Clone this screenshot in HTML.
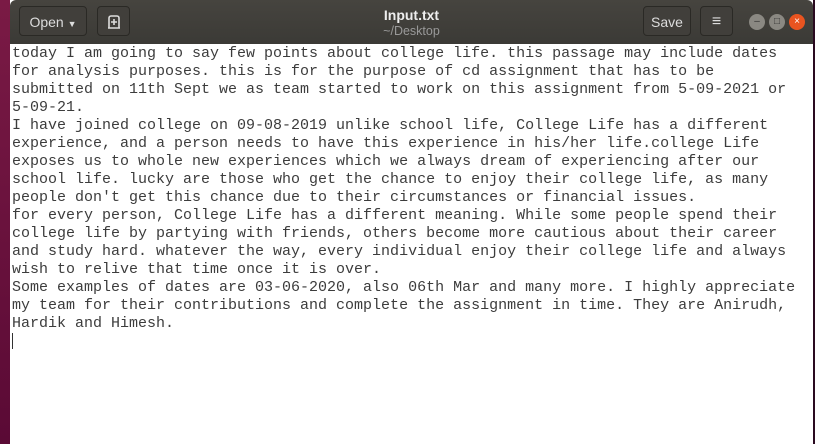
<!DOCTYPE html>
<html><head><style>
body{margin:0;width:815px;height:444px;overflow:hidden;background:linear-gradient(#7a1a45,#5a0a35);font-family:"Liberation Sans",sans-serif;position:relative}
.win{position:absolute;left:10px;top:0;width:803px;height:444px;background:#fff}
.hdr{position:absolute;left:0;top:0;width:803px;height:44px;background:linear-gradient(#46443f,#3b3a36);border-radius:6px 6px 0 0}
.btn{position:absolute;top:6px;height:30px;border:1px solid #2a2925;border-radius:4px;background:#413f3b;color:#ddd;font-size:14px;line-height:30px;text-align:center;box-sizing:border-box}
.t1{position:absolute;left:0;width:803px;text-align:center;top:7px;color:#eee;font-weight:bold;font-size:14px}
.t2{position:absolute;left:0;width:803px;text-align:center;top:24px;color:#999;font-size:12.5px}
.circ{position:absolute;top:14px;width:16px;height:16px;border-radius:50%;background:#8a8882;color:#333;font-size:10px;text-align:center;line-height:16px}
pre{position:absolute;left:2px;top:45px;margin:0;font-family:"Liberation Mono",monospace;font-size:15px;line-height:18px;color:#3c3c3c}
.cur{position:absolute;left:2px;top:333px;width:1px;height:16px;background:#333}
.redge{position:absolute;right:-2px;top:0;width:2px;height:444px;background:#2a0a20}
</style></head><body>
<div class="win">
<div class="hdr">
<div class="btn" style="left:9px;width:68px">Open <span style="font-size:9px">▼</span></div>
<div class="btn" style="left:87px;width:33px"><svg width="14" height="14" viewBox="0 0 14 14" style="margin-top:8px"><path d="M2 13V3a2 2 0 0 1 2-2h6a2 2 0 0 1 2 2v10M1 13h12M7 4v6M4 7h6" stroke="#ddd" stroke-width="1.6" fill="none"/></svg></div>
<div class="t1">Input.txt</div><div class="t2">~/Desktop</div>
<div class="btn" style="left:633px;width:48px">Save</div>
<div class="btn" style="left:690px;width:33px;font-size:16px">≡</div>
<div class="circ" style="left:739px">–</div>
<div class="circ" style="left:759px">□</div>
<div class="circ" style="left:779px;background:#e95420;color:#fff">×</div>
</div>
<pre>today I am going to say few points about college life. this passage may include dates
for analysis purposes. this is for the purpose of cd assignment that has to be
submitted on 11th Sept we as team started to work on this assignment from 5-09-2021 or
5-09-21.
I have joined college on 09-08-2019 unlike school life, College Life has a different
experience, and a person needs to have this experience in his/her life.college Life
exposes us to whole new experiences which we always dream of experiencing after our
school life. lucky are those who get the chance to enjoy their college life, as many
people don't get this chance due to their circumstances or financial issues.
for every person, College Life has a different meaning. While some people spend their
college life by partying with friends, others become more cautious about their career
and study hard. whatever the way, every individual enjoy their college life and always
wish to relive that time once it is over.
Some examples of dates are 03-06-2020, also 06th Mar and many more. I highly appreciate
my team for their contributions and complete the assignment in time. They are Anirudh,
Hardik and Himesh.</pre>
<div class="cur"></div>
<div class="redge"></div>
</div>
</body></html>
